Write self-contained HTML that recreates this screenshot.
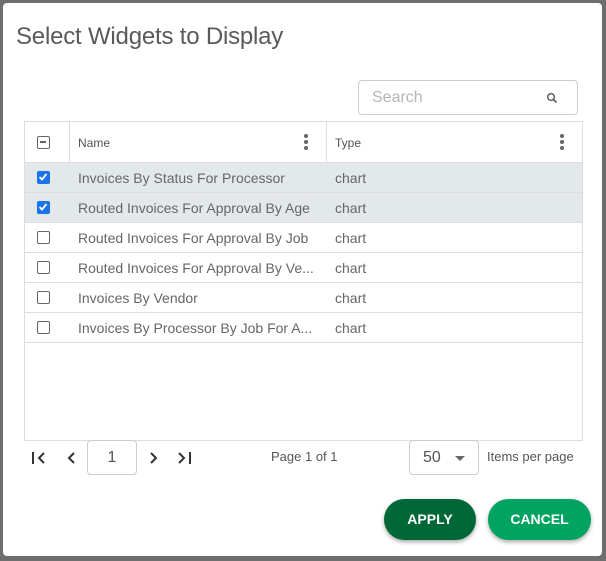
<!DOCTYPE html>
<html><head><style>
*{box-sizing:border-box;margin:0;padding:0}
body{width:606px;height:561px;background:#6e6e6e;font-family:"Liberation Sans",sans-serif;position:relative;overflow:hidden}
.dlg{position:absolute;left:3px;top:3px;width:599px;height:553px;background:#fff;border-radius:4px}
.abs{position:absolute}
h1{position:absolute;left:13px;top:20px;font-size:24px;font-weight:normal;color:#5a5a5a;letter-spacing:-0.2px}
.search{left:355px;top:77px;width:220px;height:35px;border:1px solid #ccc;border-radius:4px;color:#b5b5b5;font-size:16px;padding:8px 13px}
.tbl{left:21px;top:118px;width:559px;height:320px;border:1px solid #ddd}
.hdr{position:absolute;left:0;top:0;width:557px;height:41px;border-bottom:1px solid #ddd;font-size:12px;color:#555}
.row{position:absolute;left:0;width:557px;height:30px;border-bottom:1px solid #ddd;font-size:14px;color:#666}
.row.sel{background:#e3e9eb}
.cb{position:absolute;left:12px;width:13px;height:13px;border:1.5px solid #666;border-radius:2px;top:8px}
.cb.on{background:#1a73e8;border-color:#1a73e8}
.n{position:absolute;left:53px;top:7px}
.t{position:absolute;left:310px;top:7px}
.dots{position:absolute;width:4px;height:16px;top:12px}
.dots i{display:block;width:4px;height:4px;border-radius:2px;background:#666;margin-bottom:2px}
.pg{font-size:14px;color:#444}
.btn{position:absolute;top:496px;height:41px;border-radius:21px;color:#fff;font-weight:bold;font-size:14px;text-align:center;line-height:41px;box-shadow:0 2px 4px rgba(0,0,0,.35)}
</style></head><body>
<div class="dlg">
<h1>Select Widgets to Display</h1>
<div class="abs search">Search<svg class="abs" style="left:187px;top:11px" width="12" height="12" viewBox="0 0 12 12"><circle cx="5" cy="5" r="3.3" fill="none" stroke="#555" stroke-width="1.4"/><path d="M7.4 7.4L10.5 10.5" stroke="#555" stroke-width="1.6"/></svg></div>
<div class="abs tbl">
 <div class="hdr">
  <div class="abs" style="left:44px;top:0;width:1px;height:40px;background:#ddd"></div>
  <div class="abs" style="left:301px;top:0;width:1px;height:40px;background:#ddd"></div>
  <div class="cb" style="top:14px;border-radius:2px"><div style="position:absolute;left:2px;top:4px;width:6px;height:1.5px;background:#666"></div></div>
  <div class="abs" style="left:53px;top:14px">Name</div>
  <div class="abs" style="left:310px;top:14px">Type</div>
  <div class="dots" style="left:279px"><i></i><i></i><i></i></div>
  <div class="dots" style="left:535px"><i></i><i></i><i></i></div>
 </div>
 <div class="row sel" style="top:41px"><div class="cb on"><svg width="10" height="10" viewBox="0 0 10 10" style="position:absolute;left:0;top:0"><path d="M1.5 5L4 7.5L8.5 2" stroke="#fff" stroke-width="1.8" fill="none"/></svg></div><span class="n">Invoices By Status For Processor</span><span class="t">chart</span></div>
 <div class="row sel" style="top:71px"><div class="cb on"><svg width="10" height="10" viewBox="0 0 10 10" style="position:absolute;left:0;top:0"><path d="M1.5 5L4 7.5L8.5 2" stroke="#fff" stroke-width="1.8" fill="none"/></svg></div><span class="n">Routed Invoices For Approval By Age</span><span class="t">chart</span></div>
 <div class="row" style="top:101px"><div class="cb"></div><span class="n">Routed Invoices For Approval By Job</span><span class="t">chart</span></div>
 <div class="row" style="top:131px"><div class="cb"></div><span class="n">Routed Invoices For Approval By Ve...</span><span class="t">chart</span></div>
 <div class="row" style="top:161px"><div class="cb"></div><span class="n">Invoices By Vendor</span><span class="t">chart</span></div>
 <div class="row" style="top:191px"><div class="cb"></div><span class="n">Invoices By Processor By Job For A...</span><span class="t">chart</span></div>
</div>
<svg class="abs" style="left:28px;top:448px" width="170" height="14" viewBox="0 0 170 14">
 <path d="M2 1V13" stroke="#333" stroke-width="2"/><path d="M13 2L8 7L13 12" stroke="#333" stroke-width="2" fill="none"/>
 <path d="M43 2L38 7L43 12" stroke="#333" stroke-width="2" fill="none"/>
 <path d="M120 2L125 7L120 12" stroke="#333" stroke-width="2" fill="none"/>
 <path d="M148 2L153 7L148 12" stroke="#333" stroke-width="2" fill="none"/><path d="M159 1V13" stroke="#333" stroke-width="2"/>
</svg>
<div class="abs" style="left:84px;top:437px;width:50px;height:35px;border:1px solid #ccc;border-radius:4px;text-align:center;line-height:33px;font-size:16px;color:#555">1</div>
<div class="abs pg" style="left:268px;top:446px;font-size:13px;color:#555">Page 1 of 1</div>
<div class="abs" style="left:406px;top:437px;width:70px;height:35px;border:1px solid #ccc;border-radius:4px;font-size:16px;color:#555;padding:8px 13px">50<div class="abs" style="left:45px;top:15px;width:0;height:0;border-left:5px solid transparent;border-right:5px solid transparent;border-top:5px solid #666"></div></div>
<div class="abs" style="left:484px;top:446px;font-size:13px;color:#555">Items per page</div>
<div class="btn" style="left:381px;width:92px;background:#006837">APPLY</div>
<div class="btn" style="left:485px;width:103px;background:#00a460">CANCEL</div>
</div>
</body></html>
